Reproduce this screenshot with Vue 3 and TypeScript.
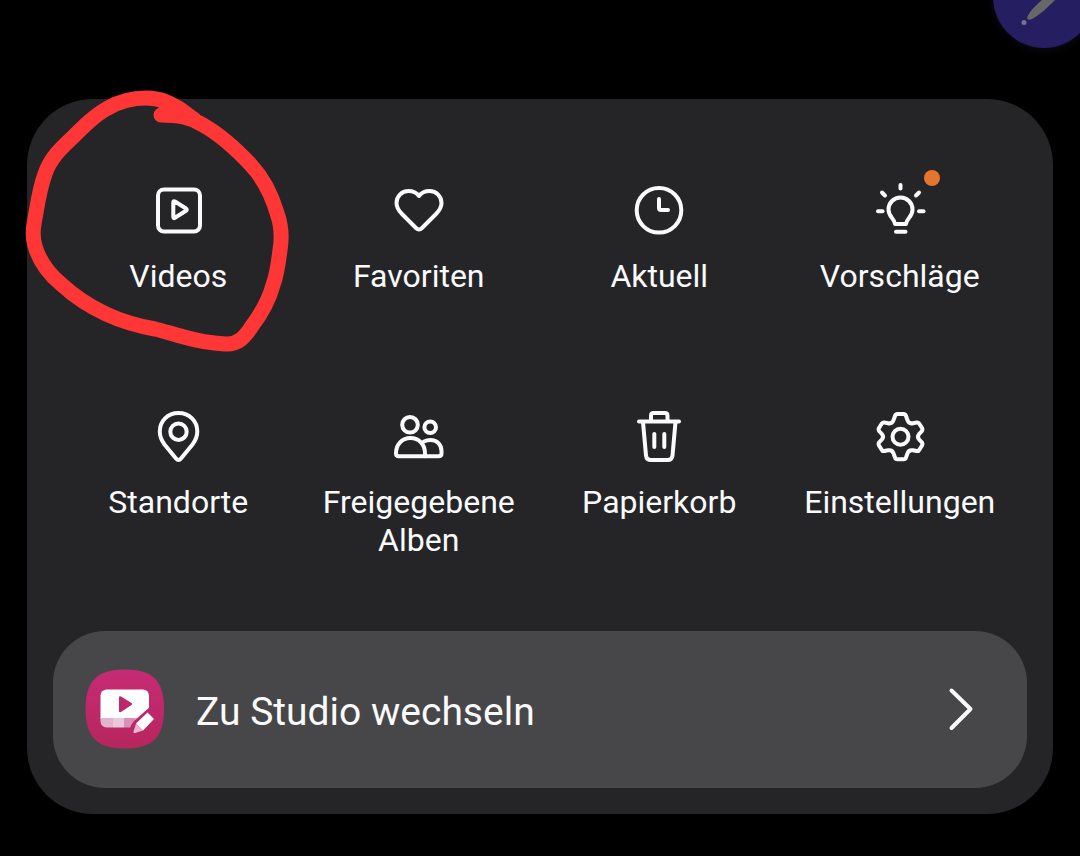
<script setup lang="ts">
type IconName = 'video' | 'heart' | 'clock' | 'bulb' | 'pin' | 'people' | 'trash' | 'gear'

interface Entry {
  label: string
  icon: IconName
  badge?: boolean
}

const entries: Entry[] = [
  { label: 'Videos', icon: 'video' },
  { label: 'Favoriten', icon: 'heart' },
  { label: 'Aktuell', icon: 'clock' },
  { label: 'Vorschläge', icon: 'bulb', badge: true },
  { label: 'Standorte', icon: 'pin' },
  { label: 'Freigegebene Alben', icon: 'people' },
  { label: 'Papierkorb', icon: 'trash' },
  { label: 'Einstellungen', icon: 'gear' },
]

const icons: Record<IconName, string[]> = {
  video: [
    'M16 9.500H46A6 6 0 0 1 52 15.500V45.500A6 6 0 0 1 46 51.500H16A6 6 0 0 1 10 45.500V15.500A6 6 0 0 1 16 9.500Z',
    'M25.300 22.500Q25.300 20.500 27 21.500L38 28.500Q39.500 29.700 38 30.800L27 37.800Q25.300 38.800 25.300 36.800Z',
  ],
  heart: [
    'M30 16C27 12 23.500 11 19.500 11C12.500 11 7.500 16.500 7.500 23C7.500 27.500 9.500 30.500 13 34L27 48Q30 51 33 48L47 34C50.500 30.500 52.500 27.500 52.500 23C52.500 16.500 47.500 11 40.500 11C36.500 11 33 12 30 16Z',
  ],
  clock: [
    'M30 8A22.300 22.300 0 1 1 30 52.600A22.300 22.300 0 1 1 30 8Z',
    'M30 19V28Q30 30 32 30H39',
  ],
  bulb: [
    'M25 44Q24.500 41 22 38C19.500 35 18.500 32.500 18.500 29.500A12 12 0 0 1 42.500 29.500C42.500 32.500 41.500 35 39 38Q36.500 41 36 44Z',
    'M26 51.800H35.500',
    'M30.500 5V8.500',
    'M12 12.500L15 15.500',
    'M49 12.500L46 15.500',
    'M8 31.200H12.500',
    'M49 31.200H53.500',
  ],
  pin: [
    'M30.500 7C19.500 7 11.800 15 11.800 25.500C11.800 30.500 13.500 34.500 16.500 38.500L28 52.500Q30.500 55.500 33 52.500L44.500 38.500C47.500 34.500 49.300 30.500 49.300 25.500C49.300 15 41.500 7 30.500 7Z',
    'M30.500 17.500A8.200 8.200 0 1 1 30.500 33.900A8.200 8.200 0 1 1 30.500 17.500Z',
  ],
  people: [
    'M21 11A7.800 7.800 0 1 1 21 26.600A7.800 7.800 0 1 1 21 11Z',
    'M41.200 15.500A5.800 5.800 0 1 1 41.200 27.100A5.800 5.800 0 1 1 41.200 15.500Z',
    'M10 50.300Q7 50.300 7 47.500C7 38.500 13 32 21.500 32C30 32 36 38.500 36 47.500V50.300Z',
    'M35 35.500Q38 34 41.500 34C48 34 52.500 38.500 52.500 45V47.500Q52.500 50.300 49.500 50.300H36',
  ],
  trash: [
    'M10 15.500H50',
    'M22 15V9.500Q22 7 24.500 7H36Q38.500 7 38.500 9.500V15',
    'M14 16L17 49.500Q17.500 54 22 54H38.500Q43 54 43.500 49.500L46.500 16',
    'M25.300 28V41',
    'M35.300 28V41',
  ],
  gear: [
    'M27.500 8H33.500Q35.500 8 36 10L37.500 14.200C38.500 17 40.500 17.800 43 17.200L46.500 16.500Q48.500 16 49.500 18L52 22Q53 24 51.500 25.500L49 28.200C47.500 30 47.500 31.500 49 33.300L51.500 36Q53 37.500 52 39.500L49.500 43.500Q48.500 45.500 46.500 45L43 44.300C40.500 43.800 38.500 44.500 37.500 47.300L36 51.500Q35.500 53.300 33.500 53.300H27.500Q25.500 53.300 25 51.500L23.500 47.300C22.500 44.500 20.500 43.800 18 44.300L14.500 45Q12.500 45.500 11.500 43.500L9 39.500Q8 37.500 9.500 36L12 33.300C13.500 31.500 13.500 30 12 28.200L9.500 25.500Q8 24 9 22L11.500 18Q12.500 16 14.500 16.500L18 17.200C20.500 17.800 22.500 17 23.500 14.200L25 10Q25.500 8 27.500 8Z',
    'M30.500 22.700A8 8 0 1 1 30.500 38.700A8 8 0 1 1 30.500 22.700Z',
  ],
}
</script>

<template>
  <main class="page">
    <button class="edit" type="button" aria-label="Bearbeiten">
      <svg viewBox="0 0 102 102" aria-hidden="true">
        <path d="M34 72C36 66 42 60 49 54L66 39L76 43L62 54C55 61 47 69 39 73Q35 75 34 72Z" fill="#686767" />
        <circle cx="31" cy="76.500" r="2.500" fill="#77748c" />
      </svg>
    </button>

    <section class="panel">
      <nav class="grid">
        <button v-for="entry in entries" :key="entry.label" class="tile" type="button">
          <span class="symbol">
            <svg viewBox="0 0 60 60" aria-hidden="true">
              <path v-for="d in icons[entry.icon]" :key="d" :d="d" />
            </svg>
            <span v-if="entry.badge" class="badge"></span>
          </span>
          <span class="label">{{ entry.label }}</span>
        </button>
      </nav>

      <button class="studio" type="button">
        <svg class="logo" viewBox="0 0 80 80" aria-hidden="true">
          <defs>
            <linearGradient id="studio-fill" x1="0" y1="0" x2="0" y2="1">
              <stop offset="0" stop-color="#c62b75" />
              <stop offset="1" stop-color="#b7265e" />
            </linearGradient>
            <clipPath id="studio-card">
              <rect x="15.500" y="20.500" width="48.500" height="38" rx="6" />
            </clipPath>
          </defs>
          <path d="M40 0.500C68 0.500 79 12 79 40S68 79.500 40 79.500S0.500 68 0.500 40S12 0.500 40 0.500Z" fill="url(#studio-fill)" />
          <g clip-path="url(#studio-card)">
            <rect x="15" y="20" width="50" height="30" fill="#fff" />
            <rect x="15" y="49" width="13" height="10" fill="#e2b3cd" />
            <rect x="28" y="49" width="11" height="10" fill="#eac7da" />
            <rect x="39" y="49" width="11" height="10" fill="#d990b9" />
            <rect x="50" y="49" width="15" height="10" fill="#e5b5cf" />
          </g>
          <path d="M66 37L49 52Q46 55 45 60L50 68L72 45Z" fill="#bd286a" />
          <path d="M34 28.500Q34 26.500 36 27.500L46.500 34Q48 35 46.500 36L36 43Q34 44 34 42Z" fill="#bd286a" />
          <path d="M62.500 43.500L69 50L58 61.500L51 54.500Z" fill="#fff" />
          <path d="M51 54.500L58 61.500L50 64Q48 64.500 48.500 62.500Z" fill="#e7b7d0" />
        </svg>
        <span class="studio-label">Zu Studio wechseln</span>
        <svg class="chevron" viewBox="0 0 30 50" aria-hidden="true">
          <path d="M6.500 6.500L25.500 25L6.500 44" />
        </svg>
      </button>

      <svg class="marker" viewBox="20 86 280 274" aria-hidden="true">
        <path d="M161 115C178 115 190 117 203 125C219 134 237 150 251 165C264 179 272 196 277 213C281 224 282 238 280 250C278 266 277 275 273 285C269 300 261 314 252 326C245 337 238 345 225 344C209 343 198 341 184 337C172 334 164 331 155 329C138 326 121 321 106 314C91 307 74 296 61 284C49 274 39 260 35 246C32 236 33 230 34 224C37 208 39 190 45 174C50 159 60 149 72 138C84 126 95 115 108 108C120 101 133 98 146 98C161 98 170 103 180 109L195 120L180 114L164 113" />
      </svg>
    </section>
  </main>
</template>

<style>
body {
  background: #000;
}
</style>

<style scoped>
.page {
  position: relative;
  box-sizing: border-box;
  min-height: 100vh;
  padding: 99px 27px 42px;
  overflow: hidden;
  background: #000;
  color: #fafafc;
  font-family: Roboto, "Noto Sans", sans-serif;
}

button {
  margin: 0;
  padding: 0;
  border: 0;
  background: none;
  color: inherit;
  font: inherit;
  cursor: pointer;
}

.edit {
  position: absolute;
  top: -54px;
  right: -15px;
  width: 102px;
  height: 102px;
  border-radius: 50%;
  background: #251e60;
  box-shadow: 0 2px 8px #0c0a18;
}

.edit svg {
  display: block;
}

.panel {
  position: relative;
  padding: 81px 26px 26px;
  border-radius: 66px;
  background: #252527;
}

.grid {
  display: grid;
  grid-template-columns: repeat(4, 1fr);
  row-gap: 73px;
  margin: 0 7px 72px 5px;
}

.tile {
  display: flex;
  flex-direction: column;
  align-items: center;
  justify-content: flex-start;
  gap: 17px;
  min-height: 153px;
}

.symbol {
  position: relative;
  width: 60px;
  height: 60px;
}

.symbol svg {
  display: block;
  fill: none;
  stroke: #fafafc;
  stroke-width: 4;
  stroke-linecap: round;
  stroke-linejoin: round;
}

.badge {
  position: absolute;
  top: -10px;
  right: -10px;
  width: 16px;
  height: 16px;
  border-radius: 50%;
  background: #e57430;
}

.label {
  font-size: 32px;
  line-height: 38px;
  text-align: center;
}

.studio {
  display: flex;
  align-items: center;
  width: 100%;
  padding: 38px 52px 39px 32px;
  border-radius: 52px;
  background: #474749;
  text-align: left;
}

.logo {
  width: 80px;
  height: 80px;
  margin-right: 31px;
}

.studio-label {
  flex: 1;
  padding-top: 5px;
  font-size: 39px;
  line-height: 46px;
}

.chevron {
  width: 30px;
  height: 50px;
  fill: none;
  stroke: #fafafc;
  stroke-width: 4;
  stroke-linecap: round;
  stroke-linejoin: round;
}

.marker {
  position: absolute;
  top: -13px;
  left: -7px;
  width: 280px;
  height: 274px;
  fill: none;
  stroke: #ff3636;
  stroke-width: 15;
  stroke-linecap: round;
  stroke-linejoin: round;
  pointer-events: none;
}
</style>
